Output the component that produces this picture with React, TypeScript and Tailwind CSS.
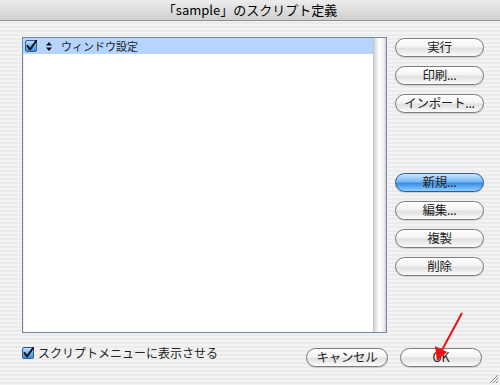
import React from "react";

const font = { fontFamily: '"Noto Sans CJK JP", "Noto Sans", sans-serif' };

function AquaCheck({ size = 12 }: { size?: number }) {
  return (
    <svg width={size} height={size} viewBox="0 0 12 12" className="shrink-0">
      <defs>
        <linearGradient id="cb" x1="0" y1="0" x2="0" y2="1">
          <stop offset="0" stopColor="#cfe6ff" />
          <stop offset="0.5" stopColor="#6fb0f2" />
          <stop offset="1" stopColor="#3d8be0" />
        </linearGradient>
      </defs>
      <rect x="0.5" y="0.5" width="11" height="11" rx="1.5" fill="url(#cb)" stroke="#2c5d98" />
      <path d="M2.5 6 L5 9.5 L11.5 0.5" fill="none" stroke="#111" strokeWidth="2" strokeLinecap="round" strokeLinejoin="round" />
    </svg>
  );
}

function Button({ label, primary = false, w = "w-[89px]" }: { label: string; primary?: boolean; w?: string }) {
  return (
    <button
      className={
        "h-[19px] rounded-full border text-[12.5px] tracking-[-0.3px] leading-none text-[#222] flex items-center justify-center shadow-[0_1px_1px_rgba(0,0,0,0.15)] " +
        w +
        (primary
          ? " border-[#2a5b9c] bg-[linear-gradient(to_bottom,#cde6ff_0%,#78b6f5_45%,#3b8ce6_55%,#8fd0ff_100%)]"
          : " border-[#7c7c7c] bg-[linear-gradient(to_bottom,#ffffff_0%,#f4f4f4_45%,#e0e0e0_55%,#fbfbfb_100%)]")
      }
      style={font}
    >
      {label}
    </button>
  );
}

export default function App() {
  return (
    <div
      className="relative w-[500px] h-[385px] overflow-hidden flex flex-col bg-[repeating-linear-gradient(to_bottom,#f3f3f3_0px,#f3f3f3_2px,#ebebeb_2px,#ebebeb_4px)]"
      style={font}
    >
      <div className="h-[21px] shrink-0 flex items-center justify-center border-b border-[#8e8e8e] bg-[linear-gradient(to_bottom,#ececec,#cfcfcf)] text-[13px] text-black">
        「sample」のスクリプト定義
      </div>

      <div className="flex flex-col pl-[22px] pt-[16px]">
        <div className="flex">
          <div className="w-[365px] h-[296px] border border-[#6f88a8] bg-white flex shadow-[inset_0_1px_2px_rgba(0,0,0,0.25)]">
            <div className="flex-1">
              <div className="h-[16px] bg-[#b5d5ff] flex items-center pl-[2px] gap-[7px]">
                <AquaCheck size={12} />
                <svg width="6" height="9" viewBox="0 0 6 9" className="ml-[2px]">
                  <path d="M3 0 L6 3.5 H0 Z M3 9 L6 5.5 H0 Z" fill="#111" />
                </svg>
                <span className="text-[11px] leading-none text-[#222] ml-[2px]">ウィンドウ設定</span>
              </div>
            </div>
            <div className="w-[13px] h-full border-l border-[#c4c4c4] bg-[linear-gradient(to_right,#d4d4d4,#ffffff_45%,#eeeeee_80%,#cfcfcf)]" />
          </div>

          <div className="ml-[8px] pt-[1px] flex flex-col gap-[9px]">
            <Button label="実行" />
            <Button label="印刷..." />
            <Button label="インポート..." />
            <div className="h-[42px]" />
            <Button label="新規..." primary />
            <Button label="編集..." />
            <Button label="複製" />
            <Button label="削除" />
          </div>
        </div>

        <div className="flex mt-[13px]">
          <div className="flex items-center gap-[4px] h-[13px]">
            <AquaCheck size={12} />
            <span className="text-[12px] leading-none text-[#222]">スクリプトメニューに表示させる</span>
          </div>
          <div className="ml-auto mr-[18px] mt-[2px] flex gap-[12px]">
            <Button label="キャンセル" w="w-[82px]" />
            <Button label="OK" w="w-[82px]" />
          </div>
        </div>
      </div>

      <svg className="absolute left-0 top-0 pointer-events-none" width="500" height="385">
        <line x1="462" y1="313" x2="442" y2="350" stroke="#f01010" strokeWidth="2" />
        <path d="M437 361 L435 346 L447 352 Z" fill="#f01010" />
      </svg>

      <svg className="absolute right-[1px] bottom-[1px]" width="11" height="11" viewBox="0 0 11 11">
        <path d="M10 2 L2 10 M10 5 L5 10 M10 8 L8 10" stroke="#8a8a8a" strokeWidth="1" />
      </svg>
    </div>
  );
}
